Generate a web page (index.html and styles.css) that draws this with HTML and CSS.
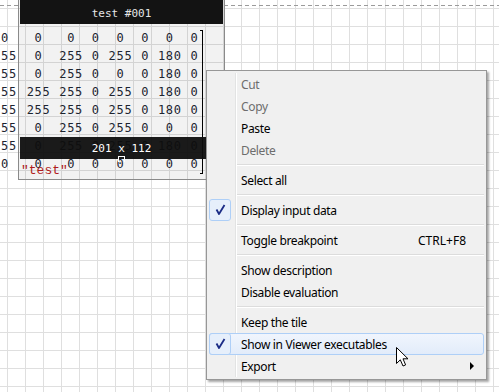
FILE: index.html
```html
<!DOCTYPE html>
<html lang="en">

<head>
  <meta charset="UTF-8">
  <meta name="viewport" content="width=device-width, initial-scale=1.0">
  <title>Tile menu</title>
  <link rel="stylesheet" href="styles.css">
</head>

<body>

  <div class="canvas">
    <div class="side">
      <div class="matrix matrix_side">
        <span>0</span>
        <span>255</span>
        <span>255</span>
        <span>255</span>
        <span>255</span>
        <span>255</span>
        <span>255</span>
        <span>0</span>
      </div>
    </div>

    <div class="tile">
      <div class="tile__title">test #001</div>
      <div class="tile__body">
        <div class="matrix">
          <span>0</span><span>0</span><span>0</span><span>0</span><span>0</span><span>0</span><span>0</span>
          <span>0</span><span>255</span><span>0</span><span>255</span><span>0</span><span>180</span><span>0</span>
          <span>0</span><span>255</span><span>0</span><span>0</span><span>0</span><span>180</span><span>0</span>
          <span>255</span><span>255</span><span>0</span><span>255</span><span>0</span><span>180</span><span>0</span>
          <span>255</span><span>255</span><span>0</span><span>255</span><span>0</span><span>180</span><span>0</span>
          <span>0</span><span>255</span><span>0</span><span>255</span><span>0</span><span>0</span><span>0</span>
          <span>0</span><span>255</span><span>0</span><span>255</span><span>0</span><span>180</span><span>0</span>
          <span>0</span><span>0</span><span>0</span><span>0</span><span>0</span><span>0</span><span>0</span>
        </div>
        <span class="tile__bracket"></span>
        <div class="tile__size">201 <span class="tile__x">x</span> 112</div>
        <span class="tile__label">"test"</span>
      </div>
    </div>
  </div>

  <div class="menu">
    <ul class="menu__list">
      <li class="menu__item menu__item_disabled">Cut</li>
      <li class="menu__item menu__item_disabled">Copy</li>
      <li class="menu__item">Paste</li>
      <li class="menu__item menu__item_disabled">Delete</li>
      <li class="menu__sep"></li>
      <li class="menu__item">Select all</li>
      <li class="menu__sep"></li>
      <li class="menu__item menu__item_checked">
        <span class="menu__check">
          <svg width="22" height="22" viewBox="0 0 22 22"><path d="M7.5 10.5 L10 15 L15.5 6" fill="none" stroke="#1b2c86" stroke-width="1.8" stroke-linejoin="round"/></svg>
        </span>
        Display input data
      </li>
      <li class="menu__sep"></li>
      <li class="menu__item">Toggle breakpoint <span class="menu__key">CTRL+F8</span></li>
      <li class="menu__sep"></li>
      <li class="menu__item">Show description</li>
      <li class="menu__item">Disable evaluation</li>
      <li class="menu__sep"></li>
      <li class="menu__item">Keep the tile</li>
      <li class="menu__item menu__item_checked menu__item_hover">
        <span class="menu__check">
          <svg width="22" height="22" viewBox="0 0 22 22"><path d="M7.5 10.5 L10 15 L15.5 6" fill="none" stroke="#1b2c86" stroke-width="1.8" stroke-linejoin="round"/></svg>
        </span>
        Show in Viewer executables
      </li>
      <li class="menu__item menu__item_sub">Export</li>
    </ul>
  </div>

  <svg class="cursor" width="14" height="21" viewBox="0 0 14 21">
    <path d="M0.5 0.5 L0.5 16.5 L4.3 12.8 L7 19 L9.6 17.9 L7 11.8 L12 11.8 Z" fill="#fff" stroke="#000" stroke-width="1" stroke-linejoin="round"/>
  </svg>

</body>
</html>
```

FILE: styles.css
```css
html,
body {
  height: 100%;
}

body {
  margin: 0;
  position: relative;
  overflow: hidden;
  background-color: #fff;
  /* dashed link line + canvas grid */
  background-image:
    repeating-linear-gradient(to right, #9a9a9a 0 4px, transparent 4px 7px),
    linear-gradient(to right, #dfdfdf 1px, transparent 1px),
    linear-gradient(to bottom, #dfdfdf 1px, transparent 1px);
  background-size: 100% 1px, 18px 18px, 18px 18px;
  background-position: 0 5px, 7px 0, 0 8px;
  background-repeat: no-repeat, repeat, repeat;
  font-family: "Noto Sans", "Open Sans", sans-serif;
}

.canvas {
  display: flex;
  align-items: flex-start;
}

.side {
  width: 18px;
  overflow: hidden;
  padding-top: 29px;
}

.matrix {
  display: grid;
  grid-template-columns: repeat(7, auto);
  column-gap: 8.8px;
  justify-content: start;
  justify-items: center;
  font-family: "DejaVu Sans Mono", monospace;
  font-size: 12px;
  line-height: 18px;
  letter-spacing: 0.7px;
  color: #1c2430;
}

.matrix_side {
  grid-template-columns: 24px;
  margin-left: -7px;
}

.tile {
  width: 203px;
  padding: 0 1px 1px;
  border: 1px solid #8a8a8a;
  border-top: 0;
  background-color: rgba(0, 0, 0, 0.05);
}

.tile__title {
  height: 24px;
  box-sizing: border-box;
  padding-top: 4px;
  line-height: 20px;
  background-color: #131313;
  color: #e6e6e6;
  text-align: center;
  font-family: "DejaVu Sans Mono", monospace;
  font-size: 11px;
}

.tile__body {
  position: relative;
  height: 154px;
  box-sizing: border-box;
  padding: 5px 0 0 6.7px;
}

.tile__bracket {
  position: absolute;
  left: 180px;
  top: 6px;
  width: 2px;
  height: 142px;
  border: 1px solid #000;
  border-left: 0;
}

.tile__size {
  position: absolute;
  left: 0;
  right: 0;
  top: 113px;
  height: 22px;
  box-sizing: border-box;
  padding-top: 1px;
  line-height: 21px;
  background-color: rgba(14, 14, 14, 0.95);
  color: #fff;
  text-align: center;
  font-family: "DejaVu Sans Mono", monospace;
  font-size: 11px;
}

.tile__x {
  position: relative;
}

.tile__x::after {
  content: '';
  position: absolute;
  left: 50%;
  top: 14px;
  width: 5px;
  height: 5px;
  margin-left: -3.5px;
  border: 1px solid #fff;
  border-bottom: 0;
}

.tile__label {
  position: absolute;
  left: 1px;
  top: 139px;
  line-height: 15px;
  font-family: "Liberation Mono", monospace;
  font-size: 13px;
  color: #b01c1c;
}

/* context menu */
.menu {
  position: absolute;
  left: 206px;
  top: 70px;
  padding: 2px;
  box-sizing: border-box;
  width: 281px;
  border: 1px solid #979797;
  background-color: #f0f0f0;
  box-shadow: 2px 2px 2px rgba(0, 0, 0, 0.35);
  font-size: 12px;
  letter-spacing: -0.35px;
  color: #000;
}

.menu::before {
  content: '';
  position: absolute;
  left: 28px;
  top: 2px;
  bottom: 2px;
  width: 1px;
  background-color: #e2e3e3;
  box-shadow: 1px 0 0 #fff;
}

.menu__list {
  list-style: none;
  margin: 0;
  padding: 0;
}

.menu__item {
  position: relative;
  display: flex;
  align-items: center;
  justify-content: space-between;
  height: 22px;
  box-sizing: border-box;
  padding: 0 17px 0 31px;
  border: 1px solid transparent;
  border-radius: 3px;
}

.menu__item_disabled {
  color: #6d6d6d;
}

.menu__item_hover {
  border-color: #aecff7;
  background: linear-gradient(to bottom, #f0f5fd, #e2ecfa);
}

.menu__check {
  position: absolute;
  left: -1px;
  top: -1px;
  width: 22px;
  height: 22px;
  box-sizing: border-box;
  border: 1px solid #aecff7;
  border-radius: 3px;
  background-color: #e6effb;
}

.menu__check svg {
  display: block;
  margin: -1px;
}

.menu__key {
  letter-spacing: 0;
}

.menu__item_sub::after {
  content: '';
  position: absolute;
  right: 9px;
  top: 6px;
  border-left: 4px solid #000;
  border-top: 4px solid transparent;
  border-bottom: 4px solid transparent;
}

.menu__sep {
  height: 1px;
  margin: 3px 0 3px 26px;
  background-color: #dcdcdc;
  border-bottom: 1px solid #fff;
}

.cursor {
  position: absolute;
  left: 396px;
  top: 347px;
}
```
